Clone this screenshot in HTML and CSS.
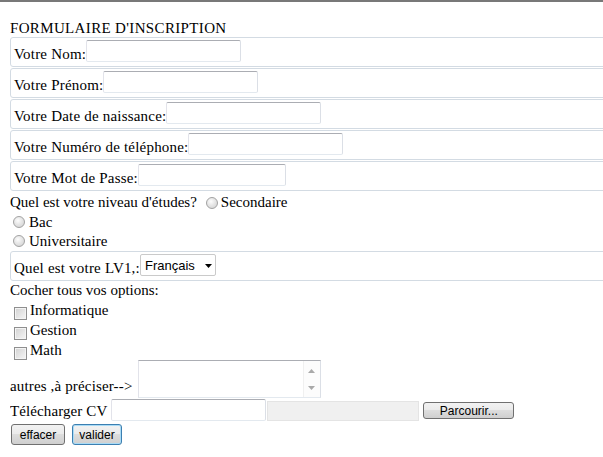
FILE: index.html
```html
<!DOCTYPE html>
<html lang="fr">
<head>
<meta charset="utf-8">
<title>Formulaire d'inscription</title>
<link rel="stylesheet" href="styles.css">
</head>
<body>
<form class="form">
  <div class="title">FORMULAIRE D'INSCRIPTION</div>

  <div class="field"><label class="lbl">Votre Nom:</label><input class="txt" type="text"></div>
  <div class="field"><label class="lbl">Votre Prénom:</label><input class="txt" type="text"></div>
  <div class="field"><label class="lbl">Votre Date de naissance:</label><input class="txt" type="text"></div>
  <div class="field"><label class="lbl">Votre Numéro de téléphone:</label><input class="txt" type="text"></div>
  <div class="field field-last"><label class="lbl">Votre Mot de Passe:</label><input class="txt txt-pwd" type="password"></div>

  <div class="line line-q"><span>Quel est votre niveau d'études?</span><input class="radio radio-q" type="radio" name="niveau"><span>Secondaire</span></div>
  <div class="line line-r"><input class="radio radio-r" type="radio" name="niveau"><span>Bac</span></div>
  <div class="line line-r"><input class="radio radio-r" type="radio" name="niveau"><span>Universitaire</span></div>

  <div class="field field-last"><label class="lbl">Quel est votre LV1,:</label><span class="sel-wrap"><select class="sel"><option>Français</option></select><svg class="sel-arrow" width="7" height="4" viewBox="0 0 7 4"><path d="M0 0H7L3.5 4Z" fill="#000"/></svg></span></div>

  <div class="cocher">Cocher tous vos options:</div>
  <div class="checks">
    <div class="line line-c"><input class="check" type="checkbox"><span>Informatique</span></div>
    <div class="line line-c"><input class="check" type="checkbox"><span>Gestion</span></div>
    <div class="line line-c"><input class="check" type="checkbox"><span>Math</span></div>
  </div>

  <div class="line autres"><span class="lbl-autres">autres ,à préciser--&gt;</span><span class="ta"><textarea class="ta-in"></textarea><span class="sb"><svg width="7" height="4" viewBox="0 0 7 4"><path d="M0 4H7L3.5 0Z" fill="#a9a9a9"/></svg><svg width="7" height="4" viewBox="0 0 7 4"><path d="M0 0H7L3.5 4Z" fill="#a9a9a9"/></svg></span></span></div>

  <div class="line upload"><span class="lbl-cv">Télécharger CV</span><input class="txt txt-cv" type="text"><span class="file-path"></span><button class="btn btn-browse" type="button">Parcourir...</button></div>

  <div class="line actions"><button class="btn btn-reset" type="reset">effacer</button><button class="btn btn-submit" type="button">valider</button></div>
</form>
</body>
</html>
```

FILE: styles.css
```css
html {
  overflow: hidden;
  background: #fff;
}

body {
  margin: 0;
  padding: 17px 0 0 10px;
  border-top: 2px solid #787878;
  font: 15px/18px "Liberation Serif", "Times New Roman", serif;
  color: #000;
}

.form {
  overflow: hidden;
  padding-bottom: 4px;
}

.title {
  line-height: 18px;
  letter-spacing: 0.35px;
}

.field {
  display: flex;
  align-items: flex-start;
  box-sizing: border-box;
  height: 30px;
  margin: 0 -40px 1px 0;
  padding: 2px 3px 0;
  border: 1px solid #d3dbe3;
  border-radius: 3px;
}

.field-last {
  margin-bottom: 0;
}

.lbl {
  margin-top: 5px;
  line-height: 18px;
  letter-spacing: 0.2px;
  white-space: nowrap;
}

.txt {
  box-sizing: border-box;
  width: 155px;
  height: 22px;
  margin: 0;
  padding: 1px 3px;
  border: 1px solid;
  border-color: #abadb3 #dbdfe6 #e3e9ef #e2e3ea;
  border-radius: 2px;
  background: #fff;
  font: 13px "Liberation Sans", Arial, sans-serif;
  outline: none;
}

.txt-pwd {
  width: 148px;
}

.line {
  display: flex;
  align-items: flex-start;
  white-space: nowrap;
}

.line-q {
  height: 22px;
  line-height: 22px;
}

.line-r {
  height: 19px;
  line-height: 19px;
}

.radio {
  appearance: none;
  -webkit-appearance: none;
  box-sizing: border-box;
  width: 12px;
  height: 12px;
  border: 1px solid #a2a2a2;
  border-radius: 50%;
  background: radial-gradient(circle at 40% 35%, #fdfdfd 0, #e6e6e6 45%, #cfcfcf 100%);
  flex: none;
}

.radio-q {
  margin: 6px 3px 0 9px;
}

.radio-r {
  margin: 3px 4px 0 3px;
}

.sel-wrap {
  position: relative;
  display: inline-block;
  height: 22px;
}

.sel {
  appearance: none;
  -webkit-appearance: none;
  box-sizing: border-box;
  width: 76px;
  height: 22px;
  margin: 0;
  padding: 0 0 0 4px;
  border: 1px solid #cacaca;
  border-radius: 2px;
  background: #fff;
  font: 13px "Liberation Sans", Arial, sans-serif;
  color: #000;
  outline: none;
}

.sel-arrow {
  position: absolute;
  right: 4px;
  top: 10px;
  pointer-events: none;
}

.cocher {
  line-height: 18px;
}

.checks {
  margin-top: 1px;
}

.line-c {
  height: 20px;
  line-height: 20px;
}

.check {
  appearance: none;
  -webkit-appearance: none;
  box-sizing: border-box;
  width: 13px;
  height: 13px;
  margin: 7px 3px 0 4px;
  border: 1px solid #8f8f8f;
  border-radius: 0;
  background: linear-gradient(135deg, #d2d2d2, #f6f6f6);
  box-shadow: inset 0 0 0 1px #f4f4f4;
  flex: none;
}

.lbl-autres {
  margin-top: 17px;
  line-height: 18px;
  letter-spacing: 0.15px;
}

.ta {
  display: inline-flex;
  box-sizing: border-box;
  width: 183px;
  height: 38px;
  margin-left: 5px;
  border: 1px solid;
  border-color: #abadb3 #dbdfe6 #e3e9ef #e2e3ea;
  background: #fff;
}

.ta-in {
  flex: 1;
  min-width: 0;
  margin: 0;
  padding: 2px;
  border: none;
  resize: none;
  outline: none;
  background: #fff;
  font: 13px "Liberation Sans", Arial, sans-serif;
}

.sb {
  display: flex;
  flex-direction: column;
  justify-content: space-between;
  align-items: center;
  box-sizing: border-box;
  width: 17px;
  padding: 8px 0 7px;
  background: #fcfcfc;
  border-left: 1px solid #f0f0f0;
}

.sb svg {
  display: block;
}

.lbl-cv {
  margin-top: 4px;
  line-height: 18px;
  letter-spacing: 0.1px;
}

.txt-cv {
  margin: 1px 0 0 4px;
}

.file-path {
  box-sizing: border-box;
  width: 152px;
  height: 20px;
  margin: 3px 0 0 1px;
  border: 1px solid #e4e4e4;
  background: #f0f0f0;
}

.btn {
  box-sizing: border-box;
  margin: 0;
  padding: 0;
  border: 1px solid #707070;
  border-radius: 3px;
  background: linear-gradient(#f2f2f2 0, #ebebeb 45%, #dddddd 50%, #cfcfcf 100%);
  font: 12px "Liberation Sans", Arial, sans-serif;
  color: #000;
  line-height: 1;
}

.btn-browse {
  width: 91px;
  height: 17px;
  margin: 4px 0 0 4px;
}

.actions {
  margin-top: 3px;
}

.btn-reset {
  width: 54px;
  height: 21px;
  margin-left: 1px;
}

.btn-submit {
  width: 50px;
  height: 21px;
  margin-left: 7px;
  border-color: #3c7fb1;
  box-shadow: inset 0 0 0 1px #a9dbf6;
}
```
